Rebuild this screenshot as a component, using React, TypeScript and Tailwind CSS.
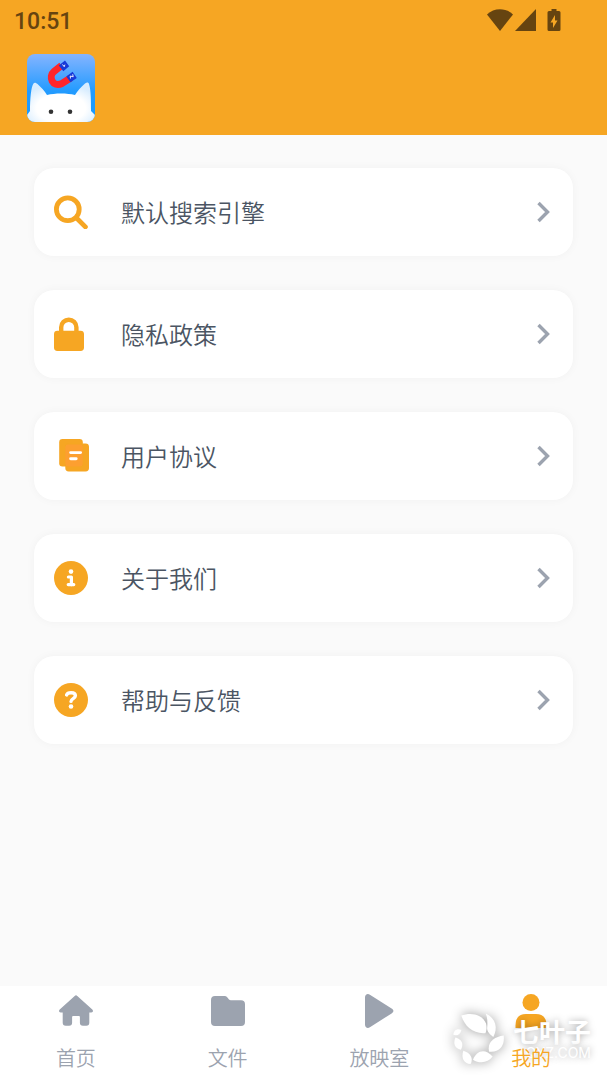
import React from "react";

const SearchIcon = () => (
  <svg viewBox="0 0 34 34" className="size-[34px]" fill="none" stroke="#f6a623" strokeLinecap="round">
    <circle cx="13.8" cy="14.3" r="11.4" strokeWidth="4.8" />
    <path d="M22.5 23 31.4 31.9" strokeWidth="4.8" />
  </svg>
);

const LockIcon = () => (
  <svg viewBox="0 0 34 34" className="size-[34px] overflow-visible" fill="none">
    <path d="M7.2 15V10.3a7.6 7.6 0 0 1 15.2 0V15" stroke="#f6a623" strokeWidth="4.4" />
    <rect y="13.7" width="30" height="20.3" rx="3.4" fill="#f6a623" />
  </svg>
);

const AgreementIcon = () => (
  <svg viewBox="0 0 34 34" className="size-[34px] overflow-visible">
    <rect x="5.2" y="0" width="23.6" height="27.4" rx="3.2" fill="#f6a623" />
    <rect x="11.3" y="4.6" width="23.7" height="27.8" rx="3.4" fill="#f6a623" />
    <rect x="11.3" y="5.4" width="17.4" height="22" rx="3" fill="#ff9d33" opacity="0.8" />
    <path d="M16.6 13.6h10M16.6 19.8h5.6" stroke="#fff" strokeWidth="2.9" strokeLinecap="round" />
  </svg>
);

const InfoIcon = () => (
  <svg viewBox="0 0 34 34" className="size-[34px]">
    <circle cx="17" cy="17" r="17" fill="#f6a623" />
    <circle cx="17" cy="10.6" r="2.3" fill="#fff" />
    <path d="M14.4 16h3v7.8M14.2 23.6h5.6" fill="none" stroke="#fff" strokeWidth="3.2" strokeLinecap="round" strokeLinejoin="round" />
  </svg>
);

const HelpIcon = () => (
  <svg viewBox="0 0 34 34" className="size-[34px]">
    <circle cx="17" cy="17" r="17" fill="#f6a623" />
    <path d="M12.6 11.9c.5-1.6 2-2.2 4.5-2.2 3 0 4.3 1.2 4.3 3.1 0 2.7-4.4 2.9-4.4 5.6" fill="none" stroke="#fff" strokeWidth="3.4" strokeLinecap="round" />
    <circle cx="17" cy="23.5" r="2.3" fill="#fff" />
  </svg>
);

const HomeIcon = () => (
  <svg viewBox="0 0 34 34" className="size-[34px]" fill="currentColor">
    <path d="M15.7 1.9a2 2 0 0 1 2.6 0L33.3 15.6C34.6 16.8 33.9 18.4 32.3 18.4H30.3V28.8Q30.3 31.8 27.3 31.8H23.9Q20.9 31.8 20.9 28.8V23Q20.9 22 19.9 22H14.1Q13.1 22 13.1 23V28.8Q13.1 31.8 10.1 31.8H6.7Q3.7 31.8 3.7 28.8V18.4H1.7C.1 18.4-.6 16.8.7 15.6Z" />
  </svg>
);

const FolderIcon = () => (
  <svg viewBox="0 0 34 34" className="size-[34px]" fill="currentColor">
    <path d="M4 2h9.5q1.7 0 2.7 1.2l1.8 2.2q.7.8 1.8.8H30q4 0 4 4V28q0 4-4 4H4q-4 0-4-4V6q0-4 4-4Z" />
  </svg>
);

const PlayIcon = () => (
  <svg viewBox="0 0 34 34" className="size-[34px]" fill="currentColor">
    <path d="M3 3.5C3 .7 5.4-.8 7.9.7L29.6 14.6c2.4 1.5 2.4 3.3 0 4.8L7.9 33.3C5.4 34.8 3 33.3 3 30.5Z" />
  </svg>
);

const UserIcon = () => (
  <svg viewBox="0 0 34 34" className="size-[34px]" fill="currentColor">
    <circle cx="17" cy="8.5" r="8.5" />
    <path d="M1.5 34v-2.5Q1.5 20 12 20h10q10.500 0 10.500 11.500V34Z" />
  </svg>
);

const ChevronIcon = () => (
  <svg viewBox="0 0 14 22" className="h-[22px] w-[14px]" fill="none">
    <path d="M2.5 2 11.5 11 2.5 20" stroke="#9ca3af" strokeWidth="3.4" />
  </svg>
);

const CatLogo = () => (
  <svg viewBox="0 0 68 68" className="size-[68px] rounded-lg">
    <defs>
      <linearGradient id="sky" x1="0" y1="0" x2="0" y2="1">
        <stop offset="0" stopColor="#85b4ff" />
        <stop offset="0.55" stopColor="#229bff" />
        <stop offset="1" stopColor="#1499ff" />
      </linearGradient>
      <radialGradient id="fur" cx="0.5" cy="0.65" r="0.6">
        <stop offset="0.6" stopColor="#fff" />
        <stop offset="1" stopColor="#d8edff" />
      </radialGradient>
    </defs>
    <rect width="68" height="68" fill="url(#sky)" />
    <path d="M0 68V61l3-4C3 45 4 33 6.500 29.500c1-1.500 2.500-.8 4 .5 4 3.500 7 7 9.500 11 8-2 20-2 28 0 2.500-4 6-8 10-11.500 2-1.500 3.500-1.500 4 .5 2 6 2 17 2 27l4 4v7Z" fill="url(#fur)" />
    <circle cx="24" cy="57.7" r="2.3" fill="#333" />
    <circle cx="43" cy="57.7" r="2.3" fill="#333" />
    <path d="M34.5 11.5 27 17.5C21 22.5 25.5 34 35 29.500L43.500 24" fill="none" stroke="#ff252b" strokeWidth="7" />
    <path d="m31.8 11.5 6.2-5 4.2 5.8-5.9 4.9ZM39.3 22.6l6.3-4.8 4.2 6.2-6.3 4.2Z" fill="#1739d8" />
    <path d="m35.5 10.5 1.7 2.2.7-2M43.5 24.5l-.3-2.5 3 .8-.5-2.5" fill="none" stroke="#fff" strokeWidth="0.9" />
  </svg>
);

const Watermark = () => (
  <div className="pointer-events-none absolute right-4 bottom-[14px] flex items-center gap-2 text-white">
    <svg viewBox="38 100 154 156" className="h-[54px] w-[53px] drop-shadow-[0_0_6px_rgba(0,0,0,0.4)]" fill="currentColor">
      <path d="M65 110c25-10 60-6 72 23 3 12 1 20-2 28-35 3-60-19-70-51Z" />
      <path d="M136 104c30 15 36 42 22 68-9-6-18-15-18-25 2-18 1-32-4-43Z" />
      <path d="M188 168c4 27-10 50-42 47-7-28 15-43 42-47Z" />
      <path d="M99 238c10-24 33-36 57-9-13 18-37 22-57 9Z" />
      <path d="M71 212c20 6 30 21 21 39-20-2-28-18-21-39Z" />
      <path d="M48 174c18 5 25 18 16 35-17-3-24-16-16-35Z" />
      <path d="M42 166c1-13 11-20 23-14-2 12-11 18-23 14Z" />
    </svg>
    <div className="flex flex-col items-end [text-shadow:0_0_7px_rgba(0,0,0,0.35)]">
      <span className="text-[26px] leading-7 font-bold">七叶子</span>
      <span className="font-['Inter'] text-sm leading-4">QYZ.COM</span>
    </div>
  </div>
);

const menuItems = [
  { label: "默认搜索引擎", icon: <SearchIcon /> },
  { label: "隐私政策", icon: <LockIcon /> },
  { label: "用户协议", icon: <AgreementIcon /> },
  { label: "关于我们", icon: <InfoIcon /> },
  { label: "帮助与反馈", icon: <HelpIcon /> },
];

const tabs = [
  { label: "首页", icon: <HomeIcon /> },
  { label: "文件", icon: <FolderIcon /> },
  { label: "放映室", icon: <PlayIcon /> },
  { label: "我的", icon: <UserIcon />, active: true },
];

const StatusBar = () => (
  <div className="flex h-[42px] items-center justify-between pr-[46px] pl-[14px] text-[#664410]">
    <span className="pt-px font-['Roboto'] text-[23px] leading-7 font-medium">10:51</span>
    <div className="flex items-center pb-[2px]">
      <svg viewBox="0 0 26 22" className="h-[22px] w-[26px]" fill="currentColor">
        <path d="M0 5.5C7-1.5 19-1.5 26 5.5L13 22Z" />
      </svg>
      <svg viewBox="0 0 22 22" className="ml-[2px] size-[22px]" fill="currentColor">
        <path d="M0 22 21 0V22Z" />
      </svg>
      <svg viewBox="0 0 14 22" className="ml-[10px] h-[22px] w-[14px]" fill="currentColor">
        <path
          fillRule="evenodd"
          d="M4.5 0h5v2H12q1.500 0 1.500 1.500v17Q13.500 22 12 22H2Q.5 22 .5 20.500v-17Q.5 2 2 2h2.500ZM8 6 3.500 13.500H6V19l4.500-7.500H8Z"
        />
      </svg>
    </div>
  </div>
);

const App = () => {
  return (
    <div className="flex min-h-screen flex-col bg-[#fafafa] font-['Noto_Sans_CJK_SC',sans-serif]">
      <header className="bg-[#f6a623]">
        <StatusBar />
        <div className="px-[27px] pt-3 pb-[13px]">
          <CatLogo />
        </div>
      </header>

      <main className="flex flex-1 flex-col gap-[34px] px-[34px] py-[33px]">
        {menuItems.map((item) => (
          <button
            key={item.label}
            className="flex h-[88px] items-center rounded-[20px] bg-white pr-[23px] pl-5 shadow-[0_0_10px_rgba(0,0,0,0.04)]"
          >
            {item.icon}
            <span className="ml-[33px] flex-1 text-left text-2xl font-[350] text-[#4b5563]">
              {item.label}
            </span>
            <ChevronIcon />
          </button>
        ))}
      </main>

      <nav className="relative bg-white">
        <Watermark />
        <div className="grid h-[94px] grid-cols-4">
          {tabs.map((tab) => (
            <button
              key={tab.label}
              className={
                "flex flex-col items-center gap-4 pt-2 " +
                (tab.active ? "text-[#f6a623]" : "text-[#9ca3af]")
              }
            >
              {tab.icon}
              <span className="relative text-xl font-[350]">{tab.label}</span>
            </button>
          ))}
        </div>
      </nav>
    </div>
  );
};

export default App;
